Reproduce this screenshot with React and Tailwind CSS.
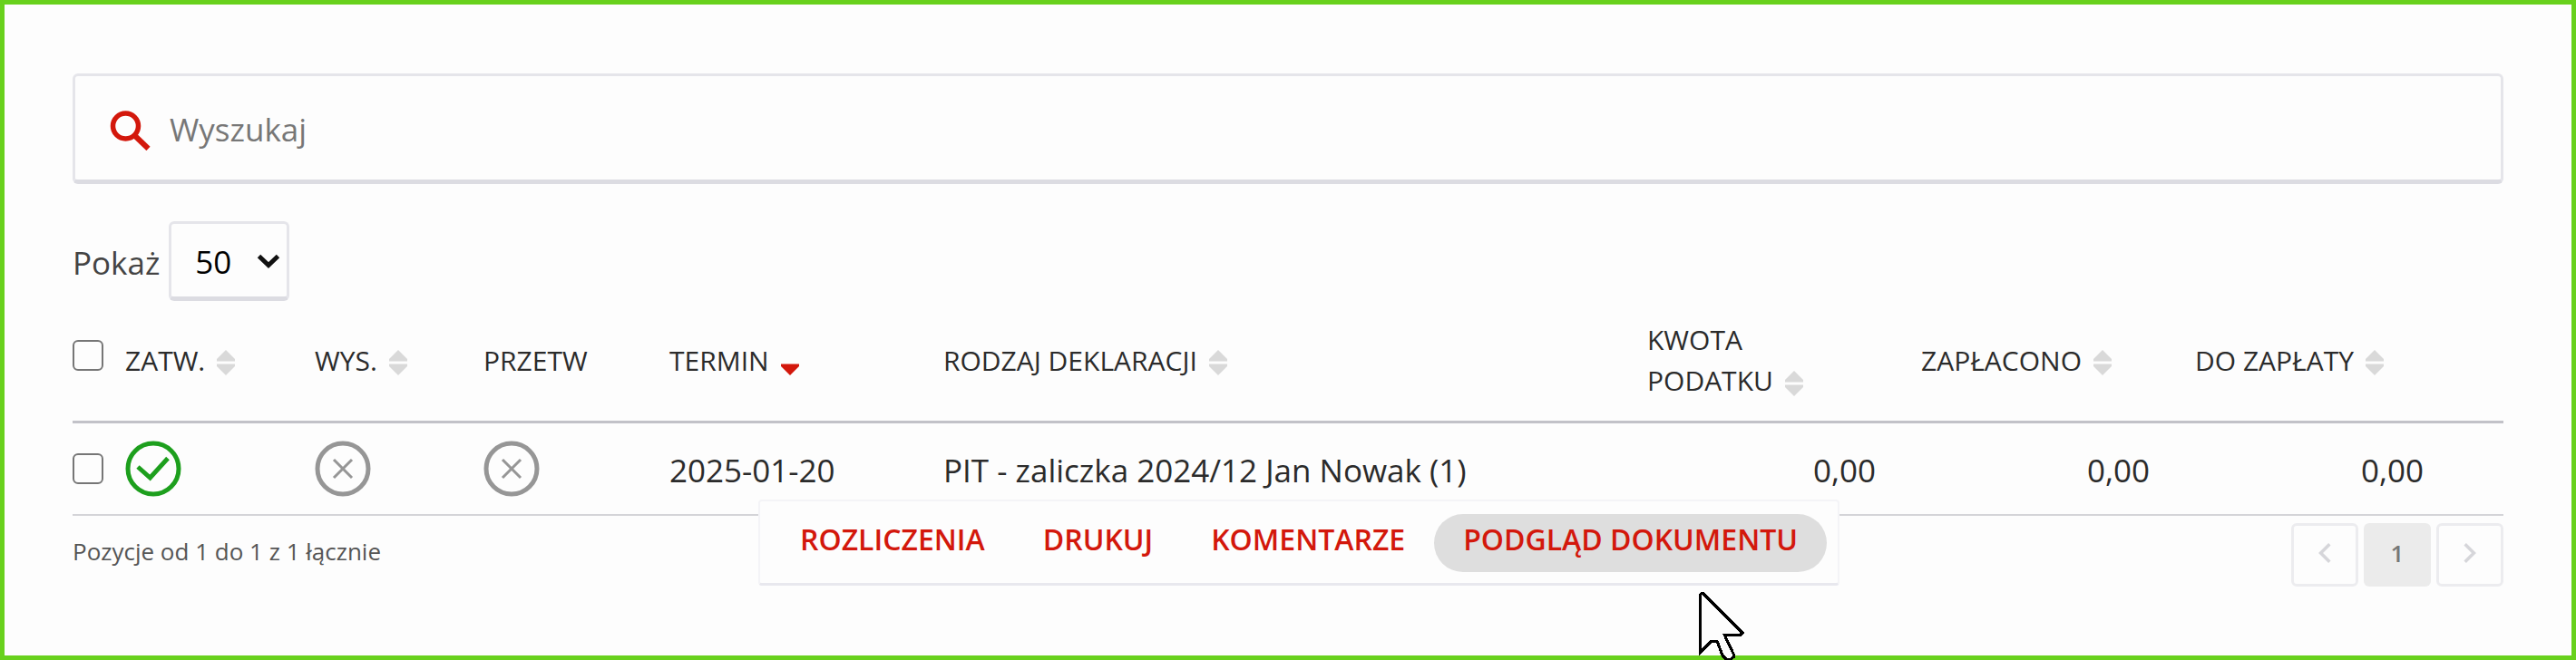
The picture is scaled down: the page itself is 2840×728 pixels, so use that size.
const columns = [
  { key: 'approved', lines: ['ZATW.'], sort: 'none', width: 'w-[209px]' },
  { key: 'sent', lines: ['WYS.'], sort: 'none', width: 'w-[186px]' },
  { key: 'processed', lines: ['PRZETW'], sort: null, width: 'w-[205px]' },
  { key: 'term', lines: ['TERMIN'], sort: 'desc', width: 'w-[302px]' },
  { key: 'kind', lines: ['RODZAJ DEKLARACJI'], sort: 'none', width: '' },
  { key: 'tax', lines: ['KWOTA', 'PODATKU'], sort: 'none', width: 'w-[302px]' },
  { key: 'paid', lines: ['ZAPŁACONO'], sort: 'none', width: 'w-[302px]' },
  { key: 'due', lines: ['DO ZAPŁATY'], sort: 'none', width: 'w-[340px]' },
]

const declarations = [
  {
    id: 1,
    approved: true,
    sent: false,
    processed: false,
    term: '2025-01-20',
    kind: 'PIT - zaliczka 2024/12 Jan Nowak (1)',
    tax: '0,00',
    paid: '0,00',
    due: '0,00',
  },
]

const rowActions = ['ROZLICZENIA', 'DRUKUJ', 'KOMENTARZE', 'PODGLĄD DOKUMENTU']

function SearchIcon() {
  return (
    <svg className="h-[46px] w-[46px] shrink-0" viewBox="0 0 46 46" fill="none" stroke="#d3180c" aria-hidden="true">
      <circle cx="17.5" cy="19" r="14" strokeWidth="5.5" />
      <path d="M27.500 29.500 42.500 44" strokeWidth="6" />
    </svg>
  )
}

function SortIcon({ sort }) {
  return (
    <svg className="ml-3 inline-block h-[28px] w-[22px] align-middle" viewBox="0 0 22 28" aria-hidden="true">
      {sort === 'none' && <path d="M11 0 21 10v2.500H1V10z" fill="#d9d9d9" />}
      <path d="M1 15.500h20V18L11 28 1 18z" fill={sort === 'desc' ? '#d3180c' : '#d9d9d9'} />
    </svg>
  )
}

function StatusIcon({ ok }) {
  return (
    <svg
      className="block h-[62px] w-[62px]"
      viewBox="0 0 62 62"
      fill="none"
      stroke={ok ? '#1d9f1d' : '#969696'}
      role="img"
      aria-label={ok ? 'Tak' : 'Nie'}
    >
      <circle cx="31" cy="31" r="28" strokeWidth="5" />
      {ok ? (
        <path d="M14 29 27.500 41 47 19.500" strokeWidth="5" />
      ) : (
        <path d="M21 21 41 41M41 21 21 41" strokeWidth="3" />
      )}
    </svg>
  )
}

function Checkbox({ label, className }) {
  return (
    <input
      type="checkbox"
      aria-label={label}
      className={`${className} h-[34px] w-[34px] appearance-none rounded-md border-2 border-[#767676] bg-[#fdfdfd]`}
    />
  )
}

function ActionMenu() {
  return (
    <div
      role="menu"
      className="absolute top-full left-[756px] z-10 -mt-[18px] flex rounded-sm border-2 border-b-3 border-[#f4f4f7] border-b-[#e8e8ee] bg-[#fdfdfd] px-3 pt-3.5 pb-3"
    >
      {rowActions.map((action) => (
        <button
          key={action}
          type="button"
          role="menuitem"
          className={
            action === 'PODGLĄD DOKUMENTU'
              ? 'rounded-full bg-[#dedede] px-8 pt-1.5 pb-3.5 text-[32px] leading-[44px] font-semibold whitespace-nowrap text-[#d3180c]'
              : 'rounded-full px-8 pt-1.5 pb-3.5 text-[32px] leading-[44px] font-semibold whitespace-nowrap text-[#d3180c]'
          }
        >
          {action}
        </button>
      ))}
    </div>
  )
}

function DeclarationsTable() {
  return (
    <div className="relative mt-5">
      <table className="w-full table-fixed border-collapse text-left text-[#2b2b2b]">
        <thead>
          <tr className="border-b-3 border-[#c2c2c8]">
            <th scope="col" className="w-[58px] p-0 pb-[22px] text-[30px] leading-[45px] font-normal">
              <Checkbox label="Zaznacz wszystkie" className="inline-block align-baseline" />
            </th>
            {columns.map(({ key, lines, sort, width }) => (
              <th key={key} scope="col" className={`${width} p-0 pb-[22px] text-[30px] leading-[45px] font-normal`}>
                <button type="button" className="block text-left whitespace-nowrap">
                  {lines.map((line, i) => (
                    <span key={line} className="block">
                      {line}
                      {sort && i === lines.length - 1 && <SortIcon sort={sort} />}
                    </span>
                  ))}
                </button>
              </th>
            ))}
          </tr>
        </thead>
        <tbody>
          {declarations.map((row) => (
            <tr key={row.id} className="h-[102px] border-b-2 border-[#d4d4d8] text-[35px] leading-[48px]">
              <td className="p-0">
                <Checkbox label="Zaznacz pozycję" className="block" />
              </td>
              <td className="p-0"><StatusIcon ok={row.approved} /></td>
              <td className="p-0"><StatusIcon ok={row.sent} /></td>
              <td className="p-0"><StatusIcon ok={row.processed} /></td>
              <td className="p-0 pt-1">{row.term}</td>
              <td className="p-0 pt-1">{row.kind}</td>
              <td className="p-0 pt-1 pr-[50px] text-right">{row.tax}</td>
              <td className="p-0 pt-1 pr-[50px] text-right">{row.paid}</td>
              <td className="p-0 pt-1 pr-22 text-right">{row.due}</td>
            </tr>
          ))}
        </tbody>
      </table>
      <ActionMenu />
    </div>
  )
}

function PageArrow({ label, d }) {
  return (
    <button
      type="button"
      aria-label={label}
      className="flex h-[70px] w-[74px] items-center justify-center rounded-md border-3 border-[#ececef] pb-1"
    >
      <svg className="h-[24px] w-[16px]" viewBox="0 0 18 26" fill="none" stroke="#d6d6da" strokeWidth="4">
        <path d={d} />
      </svg>
    </button>
  )
}

function TableFooter() {
  return (
    <div className="mt-2 flex items-start justify-between">
      <p className="pt-3 text-[26px] leading-[38px] text-[#555]">Pozycje od 1 do 1 z 1 łącznie</p>
      <nav aria-label="Strony" className="flex gap-1.5">
        <PageArrow label="Poprzednia" d="M15 2 4 13 15 24" />
        <button
          type="button"
          aria-current="page"
          className="h-[70px] w-[74px] rounded-md bg-[#ebebeb] pb-1 text-[26px] leading-[38px] font-semibold text-[#777]"
        >
          1
        </button>
        <PageArrow label="Następna" d="M3 2 14 13 3 24" />
      </nav>
    </div>
  )
}

function Cursor() {
  return (
    <svg
      className="pointer-events-none absolute top-[648px] left-[1867px] z-20 h-[75px] w-[52px]"
      viewBox="0 0 52 75"
      shapeRendering="crispEdges"
      aria-hidden="true"
    >
      <path
        d="M2 3 5 1 49 45 47 47H29L39 68V72L36 74H31L27 70 21 54H15L2 67Z"
        fill="#fdfdfd"
        stroke="#000"
        strokeWidth="3"
      />
    </svg>
  )
}

export default function App() {
  return (
    <main className="relative min-h-screen border-5 border-[#68d11c] bg-[#fdfdfd] px-[75px] pt-[76px] font-['Open_Sans',sans-serif]">
      <label className="flex h-[122px] items-center gap-5 rounded-md border-3 border-b-5 border-[#e5e5ea] border-b-[#dcdce2] px-[38px] pt-1">
        <SearchIcon />
        <input
          type="search"
          placeholder="Wyszukaj"
          aria-label="Wyszukaj"
          className="min-w-0 flex-1 bg-transparent text-[35px] leading-[48px] text-[#333] outline-none placeholder:text-[#777]"
        />
      </label>

      <div className="mt-[41px] flex items-center gap-2.5 text-[35px] leading-[48px]">
        <label htmlFor="page-size" className="pt-1 text-[#444]">Pokaż</label>
        <div className="relative">
          <select
            id="page-size"
            defaultValue="50"
            className="block h-[88px] w-[133px] appearance-none rounded-md border-3 border-b-5 border-[#e5e5ea] border-b-[#dcdce2] bg-[#fdfdfd] pt-1 pl-[26px] text-black"
          >
            <option>10</option>
            <option>25</option>
            <option>50</option>
            <option>100</option>
          </select>
          <svg
            className="pointer-events-none absolute top-9 right-2.5 h-[17px] w-[26px]"
            viewBox="0 0 26 17"
            fill="none"
            stroke="#111"
            strokeWidth="5"
            aria-hidden="true"
          >
            <path d="M2.500 2.500 13 12.500 23.500 2.500" />
          </svg>
        </div>
      </div>

      <DeclarationsTable />
      <TableFooter />
      <Cursor />
    </main>
  )
}
